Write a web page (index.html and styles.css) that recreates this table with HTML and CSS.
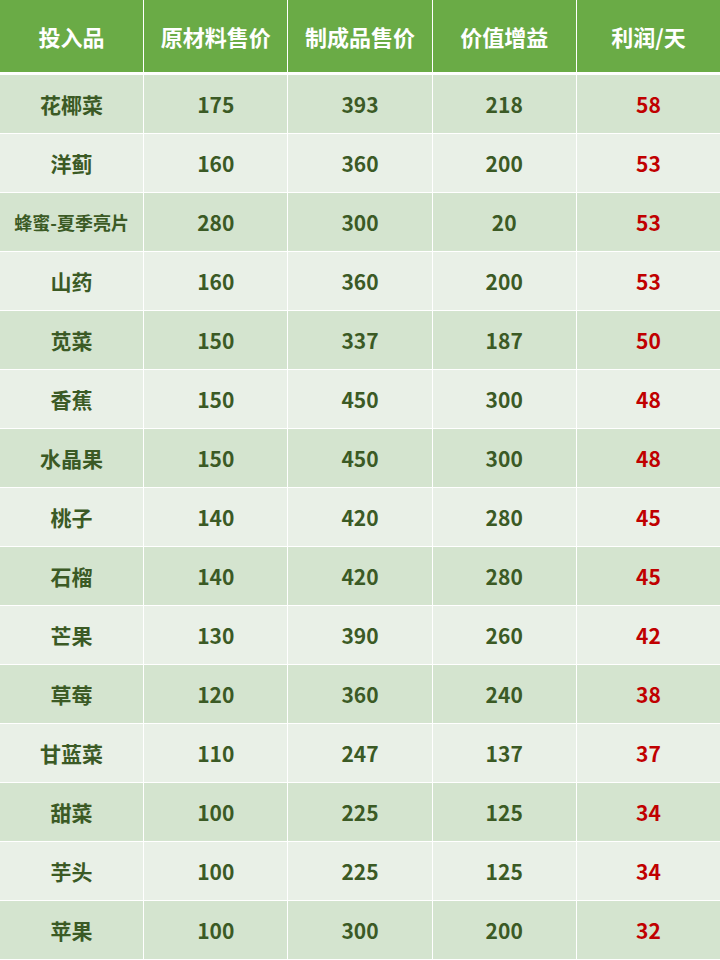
FILE: index.html
```html
<!DOCTYPE html>
<html lang="zh">
<head>
<meta charset="utf-8">
<link rel="stylesheet" href="styles.css">
</head>
<body>
<div class="table">
  <div class="row head">
    <div class="cell">投入品</div><div class="cell">原材料售价</div><div class="cell">制成品售价</div><div class="cell">价值增益</div><div class="cell">利润/天</div>
  </div>
  <div class="row dark"><div class="cell">花椰菜</div><div class="cell">175</div><div class="cell">393</div><div class="cell">218</div><div class="cell red">58</div></div>
  <div class="row light"><div class="cell">洋蓟</div><div class="cell">160</div><div class="cell">360</div><div class="cell">200</div><div class="cell red">53</div></div>
  <div class="row dark"><div class="cell small">蜂蜜-夏季亮片</div><div class="cell">280</div><div class="cell">300</div><div class="cell">20</div><div class="cell red">53</div></div>
  <div class="row light"><div class="cell">山药</div><div class="cell">160</div><div class="cell">360</div><div class="cell">200</div><div class="cell red">53</div></div>
  <div class="row dark"><div class="cell">苋菜</div><div class="cell">150</div><div class="cell">337</div><div class="cell">187</div><div class="cell red">50</div></div>
  <div class="row light"><div class="cell">香蕉</div><div class="cell">150</div><div class="cell">450</div><div class="cell">300</div><div class="cell red">48</div></div>
  <div class="row dark"><div class="cell">水晶果</div><div class="cell">150</div><div class="cell">450</div><div class="cell">300</div><div class="cell red">48</div></div>
  <div class="row light"><div class="cell">桃子</div><div class="cell">140</div><div class="cell">420</div><div class="cell">280</div><div class="cell red">45</div></div>
  <div class="row dark"><div class="cell">石榴</div><div class="cell">140</div><div class="cell">420</div><div class="cell">280</div><div class="cell red">45</div></div>
  <div class="row light"><div class="cell">芒果</div><div class="cell">130</div><div class="cell">390</div><div class="cell">260</div><div class="cell red">42</div></div>
  <div class="row dark"><div class="cell">草莓</div><div class="cell">120</div><div class="cell">360</div><div class="cell">240</div><div class="cell red">38</div></div>
  <div class="row light"><div class="cell">甘蓝菜</div><div class="cell">110</div><div class="cell">247</div><div class="cell">137</div><div class="cell red">37</div></div>
  <div class="row dark"><div class="cell">甜菜</div><div class="cell">100</div><div class="cell">225</div><div class="cell">125</div><div class="cell red">34</div></div>
  <div class="row light"><div class="cell">芋头</div><div class="cell">100</div><div class="cell">225</div><div class="cell">125</div><div class="cell red">34</div></div>
  <div class="row dark"><div class="cell">苹果</div><div class="cell">100</div><div class="cell">300</div><div class="cell">200</div><div class="cell red">32</div></div>
</div>
</body>
</html>
```
FILE: styles.css
```css
html, body {
  margin: 0;
  padding: 0;
  background: #ffffff;
}
body {
  width: 720px;
  height: 960px;
  overflow: hidden;
  font-family: "Noto Sans CJK SC", "Noto Sans", sans-serif;
}
.table {
  display: flex;
  flex-direction: column;
  gap: 1px;
  background: #ffffff;
}
.row {
  display: grid;
  grid-template-columns: repeat(5, 1fr);
  column-gap: 1px;
  height: 58px;
}
.row.head {
  height: 72px;
  margin-bottom: 2px;
}
.cell {
  display: flex;
  align-items: center;
  justify-content: center;
  font-weight: 700;
  font-size: 21px;
  color: #3b5a25;
}
.head .cell {
  background: #6aab46;
  color: #ffffff;
  font-size: 22px;
}
.dark .cell { background: #d4e4cf; }
.light .cell { background: #e9f0e7; }
.cell.small { font-size: 18px; }
.cell.red { color: #c00000; }
```
